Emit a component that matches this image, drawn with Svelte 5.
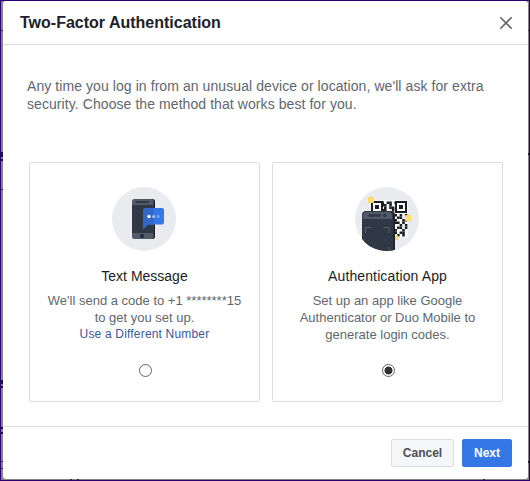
<script lang="ts">
  let method = $state('app');

  // centre cells of the QR code, one string per row
  const qr = [
    '....#.##.#....',
    '....##.#......',
    '.....#.##.....',
    '....##..#.....',
    '....#.##......',
    '#.##.#..##.#.#',
    '.#.#.##.#.##..',
    '##..#.##.#..##',
    '.##.##.#.##.#.',
    '#.#..#.##..#.#',
    '.##.##..#.##.#',
    '#..#.##.##..#.',
    '.##.#..#.#.##.',
    '#.#.##.##.#.#.',
  ];
  const cells = qr.flatMap((row, y) =>
    [...row].flatMap((c, x) => (c === '#' ? [{ x: 16 + x * 2.6, y: 14.5 + y * 2.5 }] : []))
  );
</script>

<div class="page">
  <svg class="behind" width="530" height="481" aria-hidden="true">
    <path d="M1 30.5h2M1 189.5h2M1 160h2M528 30.5h1" stroke="#333" />
    <path d="M1 152h2v5h-2zM1 159h2v2h-2zM1 380h2v4h-2zM1 386h2v2h-2zM1 427h2v2h-2zM1 432h2v2h-2zM528 153h1v2h-1zM528 461h1v2h-1z" fill="#111a25" />
    <path d="M1 461h2v1h-2zM1 468h2v1h-2zM70 479h2v1h-2zM77 479h2v1h-2zM483 479h2v1h-2z" fill="#333" />
  </svg>

  <div class="dialog">
    <header>
      <h1>Two-Factor Authentication</h1>
      <button class="close" title="Close">
        <svg width="14" height="14" viewBox="0 0 14 14" fill="none" stroke="#606770" stroke-width="1.6">
          <path d="M1.3 1.3l11.4 11.4M12.7 1.3L1.3 12.7" />
        </svg>
      </button>
    </header>

    <main>
      <p class="intro">
        Any time you log in from an unusual device or location, we'll ask for extra<br />security. Choose the method that works best for you.
      </p>

      <div class="cards">
        <label class="card">
          <svg class="art" width="64" height="64" viewBox="0 0 64 64">
            <circle cx="32" cy="32" r="32" fill="#e9ebee" />
            <rect x="21" y="12" width="22" height="40" rx="2.5" fill="#1c2028" />
            <rect x="20" y="12" width="21.5" height="40" rx="2.5" fill="#505a69" />
            <path d="M20 18h21.500v28H20z" fill="#303846" />
            <path d="M24.500 15h9" stroke="#303846" stroke-width="2" stroke-linecap="round" />
            <circle cx="36" cy="15" r="1.100" fill="#303846" />
            <circle cx="30" cy="49" r="2" fill="#252b36" />
            <path d="M33.500 21H50a2 2 0 0 1 2 2v12.500a2 2 0 0 1-2 2H36l-4.700 4.800V23a2 2 0 0 1 2.200-2z" fill="#3578e5" />
            <path d="M33.500 21h8v16.500H36l-4.700 4.800V23a2 2 0 0 1 2.200-2z" fill="#3069cb" />
            <circle cx="37" cy="29.500" r="1.700" fill="#fff" />
            <circle cx="41.700" cy="29.500" r="1.500" fill="#a8c5f6" />
            <circle cx="46.300" cy="29.500" r="1.400" fill="#78a5ef" />
          </svg>
          <span class="name">Text Message</span>
          <span class="desc">We'll send a code to +1 ********15<br />to get you set up.</span>
          <a class="link" href="#number">Use a Different Number</a>
          <input type="radio" name="method" value="sms" bind:group={method} />
        </label>

        <label class="card">
          <svg class="art" width="64" height="64" viewBox="0 0 64 64">
            <defs>
              <clipPath id="disc"><circle cx="32" cy="32" r="32" /></clipPath>
            </defs>
            <circle cx="32" cy="32" r="32" fill="#e9ebee" />
            <path d="M15.500 13.500H53v37H15.500z" fill="#fff" />
            {#each cells as cell}
              <rect x={cell.x} y={cell.y} width="2.600" height="2.500" fill="#1c1e21" />
            {/each}
            <g fill="#fff" stroke="#1c1e21" stroke-width="2">
              <path d="M17 15h10v10H17zM41 15h10v10H41z" />
            </g>
            <path d="M20 18h4v4h-4zM44 18h4v4h-4z" fill="#1c1e21" />
            <g fill="#ffdf7f" stroke="#fdd45c">
              <path d="M13.500 10.500h5v5h-5zM50.500 28.500h5v5h-5zM37.500 48.500h5v4h-5z" />
            </g>
            <g clip-path="url(#disc)">
              <rect x="9" y="24" width="31" height="46" rx="4" fill="#20252e" />
              <rect x="7" y="24" width="31" height="46" rx="4" fill="#303846" />
              <path d="M8 32v-3.500A3.500 3.500 0 0 1 11.500 25h22a3.500 3.500 0 0 1 3.500 3.500V32z" fill="#505a69" />
              <path d="M14.500 28.500H25" stroke="#303846" stroke-width="2.400" stroke-linecap="round" />
              <circle cx="29.700" cy="28.500" r="1.700" fill="#303846" />
              <path d="M10.500 46v-5.500H16M28.500 40.500h5.500V46M34 60v4" fill="none" stroke="#56606f" />
            </g>
          </svg>
          <span class="name wide">Authentication App</span>
          <span class="desc">Set up an app like Google<br />Authenticator or Duo Mobile to<br />generate login codes.</span>
          <input type="radio" name="method" value="app" bind:group={method} />
        </label>
      </div>
    </main>

    <footer>
      <button class="btn">Cancel</button>
      <button class="btn primary">Next</button>
    </footer>
  </div>
</div>

<style>
  .page {
    position: relative;
    box-sizing: border-box;
    width: 530px;
    height: 481px;
    padding: 0 1px 1px 2px;
    border: 1px solid #2b006f;
    background: #858585;
    font-family: 'Liberation Sans', Arial, sans-serif;
  }

  .behind {
    position: absolute;
    top: -1px;
    left: -1px;
  }

  .dialog {
    position: relative;
    display: flex;
    flex-direction: column;
    height: 478px;
    background: #fff;
    border-radius: 3px;
  }

  header {
    display: flex;
    align-items: center;
    justify-content: space-between;
    box-sizing: border-box;
    height: 44px;
    padding: 0 15px 0 17px;
    border-bottom: 1px solid #dadde1;
  }

  h1 {
    margin: 0;
    color: #1d2129;
    font-size: 16px;
    line-height: 20px;
  }

  .close {
    display: flex;
    padding: 0;
    border: none;
    background: none;
    cursor: pointer;
  }

  main {
    flex: 1;
    padding: 32px 25px 0 24px;
  }

  .intro {
    margin: 0 0 49px;
    color: #606770;
    font-size: 14px;
    line-height: 18px;
    letter-spacing: 0.075px;
    white-space: nowrap;
  }

  .cards {
    display: flex;
    gap: 12px;
    margin-left: 2px;
  }

  .card {
    display: flex;
    flex-direction: column;
    align-items: center;
    box-sizing: border-box;
    width: 231px;
    height: 240px;
    padding: 24px 0;
    border: 1px solid #dadde1;
    border-radius: 2px;
    text-align: center;
    white-space: nowrap;
  }

  .art {
    margin-right: 1px;
  }

  .name {
    margin-top: 16px;
    color: #1c1e21;
    font-size: 14px;
    line-height: 18px;
  }

  .wide {
    letter-spacing: 0.12px;
  }

  .desc {
    margin-top: 7px;
    color: #606770;
    font-size: 13px;
    line-height: 17px;
  }

  .link {
    color: #385898;
    font-size: 12px;
    line-height: 16px;
    letter-spacing: 0.18px;
    text-decoration: none;
  }

  input {
    appearance: none;
    box-sizing: border-box;
    width: 13px;
    height: 13px;
    margin: auto 0 0 1px;
    border: 1px solid #666;
    border-radius: 50%;
  }

  input:checked {
    background: radial-gradient(circle, #333 3.700px, #fff 4.300px);
  }

  footer {
    display: flex;
    justify-content: flex-end;
    gap: 8px;
    box-sizing: border-box;
    height: 53px;
    padding: 12px 16px 12px 0;
    border-top: 1px solid #dadde1;
  }

  .btn {
    box-sizing: border-box;
    width: 63px;
    height: 28px;
    padding: 0;
    border: 1px solid #dadde1;
    border-radius: 2px;
    background: #f5f6f7;
    color: #4b4f56;
    font: bold 12px 'Liberation Sans', Arial, sans-serif;
    cursor: pointer;
  }

  .primary {
    width: 50px;
    border-color: #3578e5;
    background: #3578e5;
    color: #fff;
  }
</style>
